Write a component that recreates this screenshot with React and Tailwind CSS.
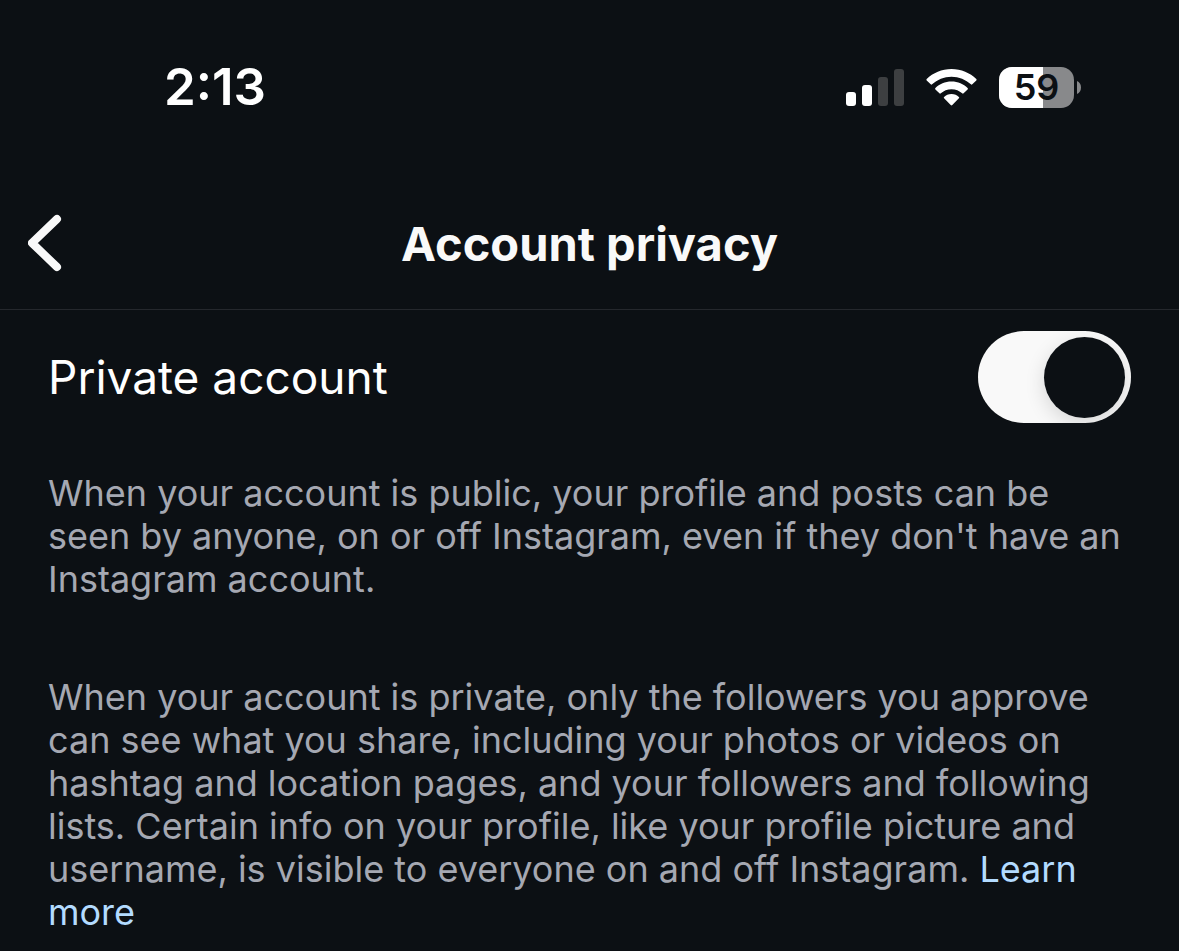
import { useState } from "react";

function SignalIcon() {
  return (
    <svg width="58" height="38" viewBox="0 0 58 38" aria-hidden="true">
      <rect x="0" y="24" width="10" height="14" rx="3" fill="#fff" />
      <rect x="16" y="17" width="10" height="21" rx="3" fill="#fff" />
      <rect x="32" y="9" width="10" height="29" rx="3" fill="#3d3f41" />
      <rect x="48" y="1" width="10" height="37" rx="3" fill="#3d3f41" />
    </svg>
  );
}

function WifiIcon() {
  return (
    <svg width="51" height="38" viewBox="0 0 51 38" fill="#fff" aria-hidden="true">
      <path d="M25.500 1C35.200 1 44 4.800 50.300 11.100Q51 11.800 50.300 12.500L46.300 16.300Q45.600 17 44.900 16.300C39.800 11.600 33 8.700 25.500 8.700S11.200 11.600 6.100 16.300Q5.400 17 4.700 16.300L.7 12.500Q0 11.800 .7 11.100C7 4.800 15.800 1 25.500 1Z" />
      <path d="M25.500 13.500C32 13.500 37.500 16 41.600 20Q42.300 20.700 41.600 21.400L37.600 25.300Q36.900 26 36.200 25.300C33.400 22.800 29.700 21.200 25.500 21.200S17.600 22.800 14.800 25.300Q14.100 26 13.400 25.300L9.400 21.400Q8.700 20.700 9.400 20C13.500 16 19 13.500 25.500 13.500Z" />
      <path d="M25.500 26C28.600 26 31 27.200 32.900 28.900Q33.600 29.600 32.900 30.300L26.300 37.100Q25.500 37.900 24.700 37.100L18.100 30.300Q17.400 29.600 18.100 28.900C20 27.200 22.400 26 25.500 26Z" />
    </svg>
  );
}

function Battery({ level }) {
  return (
    <div className="flex items-center gap-[3px]">
      <div className="relative flex h-[41px] w-[75px] items-center justify-center overflow-hidden rounded-[13px] bg-[#88898b]">
        <div
          className="absolute inset-y-0 left-0 bg-white"
          style={{ width: `${level}%` }}
        />
        <span className="relative text-4xl font-semibold text-[#0c1014]">
          {level}
        </span>
      </div>
      <svg width="4" height="13" viewBox="0 0 4 13" aria-hidden="true">
        <path d="M0 0C2.500 1 4 3.500 4 6.500S2.500 12 0 13Z" fill="#88898b" />
      </svg>
    </div>
  );
}

function StatusBar() {
  return (
    <div className="flex h-44 items-center justify-between pr-[98px] pb-0.5 pl-[164px]">
      <span className="text-[51px] font-semibold text-white">2:13</span>
      <div className="flex items-center gap-[22px]">
        <SignalIcon />
        <WifiIcon />
        <Battery level={59} />
      </div>
    </div>
  );
}

function Header() {
  return (
    <header className="grid h-[134px] grid-cols-[1fr_auto_1fr] items-center border-b border-[#25282d] px-7">
      <button type="button" aria-label="Back" className="justify-self-start">
        <svg width="34" height="58" viewBox="0 0 34 58" fill="none" aria-hidden="true">
          <path
            d="M29 5L4 29L29 53"
            stroke="#f9f9f9"
            strokeWidth="8"
            strokeLinecap="round"
            strokeLinejoin="round"
          />
        </svg>
      </button>
      <h1 className="pt-0.5 text-[47px] leading-none font-bold text-[#f9f9f9]">
        Account privacy
      </h1>
    </header>
  );
}

export default function App() {
  const [isPrivate, setIsPrivate] = useState(true);

  return (
    <div className="min-h-screen bg-[#0c1014] font-['Inter',sans-serif]">
      <StatusBar />
      <Header />
      <main className="px-12 pb-4">
        <div className="flex items-center justify-between pt-[21px]">
          <label htmlFor="private-account" className="text-[46px] text-white">
            Private account
          </label>
          <input
            id="private-account"
            type="checkbox"
            role="switch"
            checked={isPrivate}
            onChange={(e) => setIsPrivate(e.target.checked)}
            className="flex h-[92px] w-[153px] cursor-pointer appearance-none items-center overflow-hidden rounded-full bg-[#3a3f45] px-[6px] before:size-[81px] before:rounded-full before:bg-[#0c1014] before:shadow-[0_6px_20px_rgba(0,0,0,0.14)] checked:justify-end checked:bg-[#f9f9f9]"
          />
        </div>
        <p className="mt-[49px] text-4xl leading-[43px] text-[#a5a8b2]">
          When your account is public, your profile and posts can be seen by
          anyone, on or off Instagram, even if they don't have an Instagram
          account.
        </p>
        <p className="mt-[75px] text-4xl leading-[43px] text-[#a5a8b2]">
          When your account is private, only the followers you approve can see
          what you share, including your photos or videos on hashtag and
          location pages, and your followers and following lists. Certain info
          on your profile, like your profile picture and username, is visible
          to everyone on and off Instagram.{" "}
          <a href="#learn-more" className="text-[#b3dbff]">
            Learn more
          </a>
        </p>
      </main>
    </div>
  );
}
